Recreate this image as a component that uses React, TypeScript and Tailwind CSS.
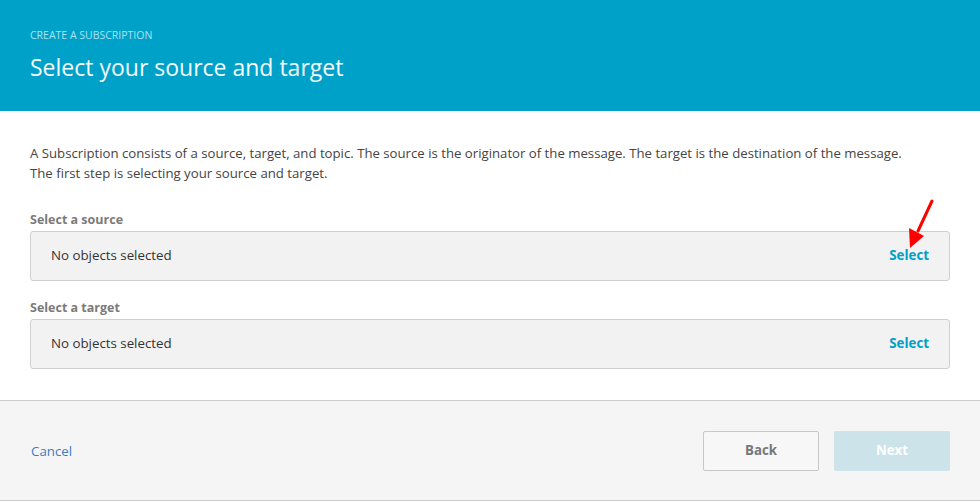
import React from "react";

const font = { fontFamily: '"Open Sans", "Noto Sans", Arial, sans-serif' };

function Picker({ label }: { label: string }) {
  return (
    <div className="flex flex-col">
      <div className="text-[12.5px] font-bold leading-[18px] text-[#7b7b7b]">{label}</div>
      <div className="mt-[2px] flex h-[50px] items-center justify-between rounded-[3px] border border-[#cfcfcf] bg-[#f2f2f2] pl-5 pr-5">
        <span className="text-[13.3px] text-[#333]">No objects selected</span>
        <button className="text-[13.3px] font-bold text-[#00a1c9]">Select</button>
      </div>
    </div>
  );
}

export default function App() {
  return (
    <div className="relative h-[502px] w-[980px] overflow-hidden bg-white" style={font}>
      <div className="flex h-[111px] flex-col bg-[#00a1c9] px-[30px] pt-[27px]">
        <div className="text-[10.5px] leading-[16px] text-[#a8e3f2]">CREATE A SUBSCRIPTION</div>
        <h1 className="mt-[8px] text-[23px] leading-[32px] text-[#f4fbfd]">Select your source and target</h1>
      </div>

      <div className="flex h-[289px] flex-col px-[30px] pt-[32px]">
        <p className="text-[13.2px] leading-[20px] text-[#444]">
          A Subscription consists of a source, target, and topic. The source is the originator of the message. The target is the destination of the message.
          <br />
          The first step is selecting your source and target.
        </p>
        <div className="mt-[28px] flex flex-col gap-[18px]">
          <Picker label="Select a source" />
          <Picker label="Select a target" />
        </div>
      </div>

      <div className="flex h-[101px] items-center justify-between border-y border-[#cccccc] bg-[#f5f5f5] px-[30px] pt-px">
        <button className="pl-px pt-px text-[13.3px] text-[#3b7dbd]">Cancel</button>
        <div className="flex gap-[15px]">
          <button className="h-[40px] w-[116px] rounded-[2px] border border-[#c8c8c8] bg-[#f7f7f7] text-[13.3px] font-bold text-[#777]">Back</button>
          <button className="h-[40px] w-[116px] rounded-[2px] bg-[#cce3ea] text-[13.3px] font-bold text-white">Next</button>
        </div>
      </div>

      <svg className="absolute left-[900px] top-[195px]" width="40" height="60" viewBox="0 0 40 60">
        <line x1="32" y1="6" x2="18" y2="36" stroke="#f00" strokeWidth="3" strokeLinecap="round" />
        <polygon points="10,53 9,33 24,41" fill="#f00" />
      </svg>
    </div>
  );
}
